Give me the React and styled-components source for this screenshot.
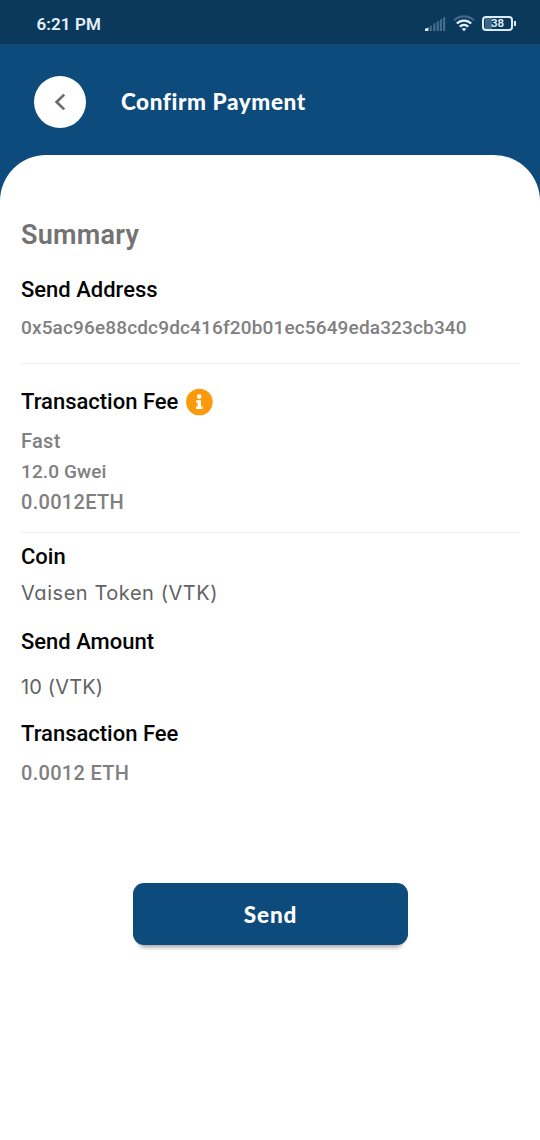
import React from 'react';
import styled, { createGlobalStyle } from 'styled-components';

const App = () => {
    return (
        <>
            <GlobalStyle />
            <Screen>
                <StatusBar>
                    <Clock>6:21 PM</Clock>
                    <StatusIcons>
                        <SignalIcon />
                        <WifiIcon />
                        <Battery>
                            <BatteryBody>38</BatteryBody>
                            <BatteryTip />
                        </Battery>
                    </StatusIcons>
                </StatusBar>
                <Header>
                    <BackButton aria-label="Back">
                        <svg width="12" height="18" viewBox="0 0 12 18" fill="none" stroke="#6d6d6d" strokeWidth="2.7">
                            <path d="M10.2 1.6 2.6 9l7.6 7.4" />
                        </svg>
                    </BackButton>
                    <Title>Confirm Payment</Title>
                </Header>
                <Sheet>
                    <Heading>Summary</Heading>

                    <Label $top={25}>Send Address</Label>
                    <Value $top={13} $size={19} $spacing={0.15}>0x5ac96e88cdc9dc416f20b01ec5649eda323cb340</Value>
                    <Divider $top={23} />

                    <LabelRow>
                        <Label>Transaction Fee</Label>
                        <InfoIcon />
                    </LabelRow>
                    <Value $top={13}>Fast</Value>
                    <Value $top={7} $size={19} $spacing={0.1}>12.0 Gwei</Value>
                    <Value $top={6}>0.0012ETH</Value>
                    <Divider $top={18} />

                    <Label $top={11}>Coin</Label>
                    <TokenValue $top={10} $spacing={0.55}>Vaisen Token (VTK)</TokenValue>
                    <Label $top={23}>Send Amount</Label>
                    <TokenValue $top={19} $spacing={0.15}>10 (VTK)</TokenValue>
                    <Label $top={21}>Transaction Fee</Label>
                    <Value $top={14}>0.0012 ETH</Value>

                    <SendButton>Send</SendButton>
                </Sheet>
            </Screen>
        </>
    );
}

const SignalIcon = () => (
    <svg width="21" height="16" viewBox="0 0 21 16">
        <path d="M0 15v-2.2l3.4-1.4V15z" fill="#e3f1fb" />
        <g fill="#456c8b">
            <path d="M4.6 10.4 6.8 9.3V15H4.6z" />
            <path d="M8.2 8 10.4 6.8V15H8.2z" />
            <path d="M11.6 6l2.2-1.4V15h-2.2z" />
            <path d="M14.8 4 17 2.6V15h-2.2z" />
            <path d="M18 2 20.2.6V15H18z" />
        </g>
    </svg>
);

const WifiIcon = () => (
    <svg width="22" height="17" viewBox="0 0 22 17" fill="none" strokeWidth="2.2">
        <path d="M1.2 5.2a14.4 14.4 0 0 1 19.6 0" stroke="#41698a" />
        <path d="M3.8 8.6a10 10 0 0 1 14.4 0" stroke="#e3f1fb" />
        <path d="M6.8 11.8a5.6 5.6 0 0 1 8.4 0" stroke="#e3f1fb" />
        <path d="M8.8 13.9a3.4 3.4 0 0 1 4.4 0L11 16.2z" fill="#e3f1fb" />
    </svg>
);

const InfoIcon = () => (
    <svg width="28" height="28" viewBox="0 0 28 28">
        <circle cx="14.4" cy="14" r="13.3" fill="#fb9a0c" />
        <circle cx="14.2" cy="8.6" r="2.3" fill="#fff" />
        <path d="M11 12.2h5v6.4h1.6V21H11v-2.4h1.6v-4H11z" fill="#fff" />
    </svg>
);

const GlobalStyle = createGlobalStyle`
  * {
   box-sizing: border-box;
  }

  body {
   margin: 0;
   background: #fff;
   font-family: Roboto, "Liberation Sans", sans-serif;
  }
`;

const Screen = styled.div`
  display: flex;
  flex-direction: column;
  width: 540px;
  height: 1140px;
  overflow: hidden;
  background: #0c4b7b;
`;

/*Status bar*/
const StatusBar = styled.div`
  display: flex;
  align-items: center;
  justify-content: space-between;
  height: 44px;
  padding: 4px 25px 0 36.5px;
  background: #0a395c;
  color: #e3f1fb;
`;

const Clock = styled.span`
  font-size: 17px;
  font-weight: 600;
  line-height: 20px;
  letter-spacing: 0.1px;
`;

const StatusIcons = styled.div`
  display: flex;
  align-items: center;
  gap: 7px;
  margin-top: -1px;
`;

const Battery = styled.div`
  display: flex;
  align-items: center;
  gap: 1px;
`;

const BatteryBody = styled.div`
  display: flex;
  align-items: center;
  justify-content: center;
  width: 31px;
  height: 15px;
  border: 2px solid #dcebf7;
  border-radius: 4px;
  background: linear-gradient(to right, transparent 1px, #3f6685 1px, #3f6685 8px, transparent 8px);
  font-size: 11.5px;
  font-weight: 600;
  line-height: 11px;
`;

const BatteryTip = styled.div`
  width: 2px;
  height: 5px;
  margin-right: -1px;
  background: #dcebf7;
`;

/*Header*/
const Header = styled.header`
  display: flex;
  align-items: center;
  gap: 34.5px;
  height: 111px;
  padding: 5px 34px 0 34.4px;
`;

const BackButton = styled.button`
  display: flex;
  align-items: center;
  justify-content: center;
  width: 52px;
  height: 52px;
  padding: 0;
  border: none;
  border-radius: 50%;
  background: #fff;
`;

const Title = styled.h1`
  margin: 0;
  color: #fff;
  font-family: Lato, sans-serif;
  font-size: 22.5px;
  font-weight: 900;
  line-height: 28px;
  letter-spacing: 0.6px;
`;

/*Content*/
const Sheet = styled.main`
  display: flex;
  flex: 1;
  flex-direction: column;
  padding: 63px 20px 0 21px;
  border-radius: 46px 46px 0 0;
  background: #fff;
`;

const Heading = styled.h2`
  margin: 0;
  color: #737373;
  font-size: 27px;
  font-weight: 600;
  line-height: 34px;
  letter-spacing: 0.25px;
`;

const Label = styled.h3`
  margin: ${({ $top = 0 }) => $top}px 0 0;
  color: #050505;
  font-size: 22px;
  font-weight: 500;
  line-height: 26px;
`;

const LabelRow = styled.div`
  display: flex;
  align-items: center;
  gap: 7px;
  margin-top: 24px;
`;

const Value = styled.p`
  margin: ${({ $top }) => $top}px 0 0;
  color: #808080;
  font-size: ${({ $size = 20 }) => $size}px;
  font-weight: 500;
  line-height: 24px;
  letter-spacing: ${({ $spacing = 0.3 }) => $spacing}px;
`;

const TokenValue = styled(Value)`
  color: #626262;
  font-family: Inter, sans-serif;
  font-feature-settings: "cv11";
  font-weight: 400;
  line-height: 26px;
`;

const Divider = styled.hr`
  width: 100%;
  height: 1px;
  margin: ${({ $top }) => $top}px 0 0;
  border: none;
  background: #f1f1f1;
`;

const SendButton = styled.button`
  align-self: center;
  width: 275px;
  height: 62px;
  margin-top: 98px;
  padding: 0;
  border: none;
  border-radius: 11px;
  background: #0c4b7b;
  box-shadow: 0 8px 5px -6px rgba(0, 0, 0, 0.4);
  color: #fff;
  font-family: Lato, sans-serif;
  font-size: 22.5px;
  font-weight: 900;
  letter-spacing: 0.9px;
`;

export default App;
